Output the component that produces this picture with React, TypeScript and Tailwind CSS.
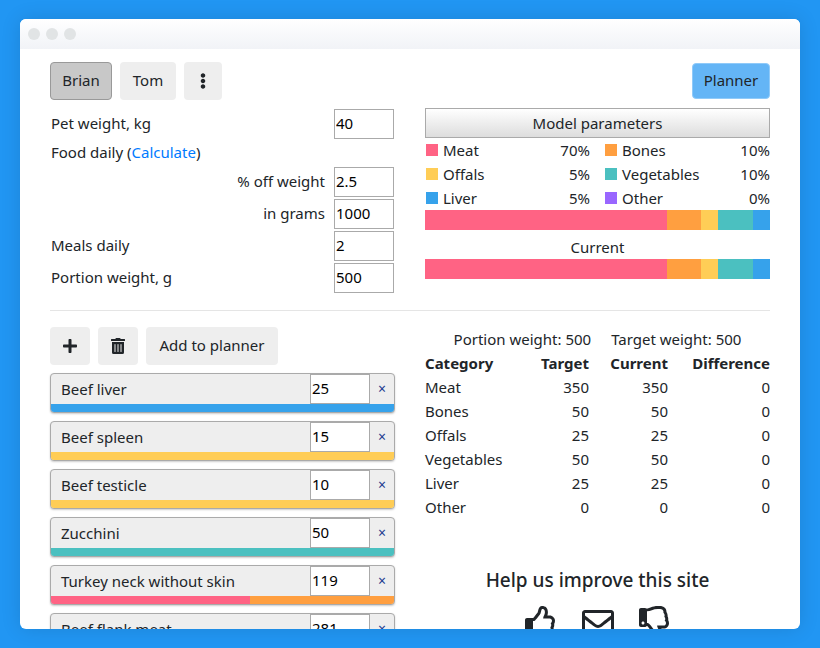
import React from 'react';
import { FaPlus, FaTrashAlt, FaEllipsisV, FaRegThumbsUp, FaRegThumbsDown, FaRegEnvelope } from 'react-icons/fa';

const legend: { name: string; pct: string; swatch: string }[] = [
  { name: 'Meat', pct: '70%', swatch: 'bg-[#ff6384]' },
  { name: 'Bones', pct: '10%', swatch: 'bg-[#ff9f40]' },
  { name: 'Offals', pct: '5%', swatch: 'bg-[#ffcd56]' },
  { name: 'Vegetables', pct: '10%', swatch: 'bg-[#4bc0c0]' },
  { name: 'Liver', pct: '5%', swatch: 'bg-[#36a2eb]' },
  { name: 'Other', pct: '0%', swatch: 'bg-[#9966ff]' },
];

const rows = [
  ['Meat', '350', '350', '0'],
  ['Bones', '50', '50', '0'],
  ['Offals', '25', '25', '0'],
  ['Vegetables', '50', '50', '0'],
  ['Liver', '25', '25', '0'],
  ['Other', '0', '0', '0'],
];

const foods: { name: string; qty: string; bars: { cls: string; w: string }[] }[] = [
  { name: 'Beef liver', qty: '25', bars: [{ cls: 'bg-[#36a2eb]', w: '100%' }] },
  { name: 'Beef spleen', qty: '15', bars: [{ cls: 'bg-[#ffcd56]', w: '100%' }] },
  { name: 'Beef testicle', qty: '10', bars: [{ cls: 'bg-[#ffcd56]', w: '100%' }] },
  { name: 'Zucchini', qty: '50', bars: [{ cls: 'bg-[#4bc0c0]', w: '100%' }] },
  { name: 'Turkey neck without skin', qty: '119', bars: [{ cls: 'bg-[#ff6384]', w: '58%' }, { cls: 'bg-[#ff9f40]', w: '42%' }] },
  { name: 'Beef flank meat', qty: '281', bars: [{ cls: 'bg-[#ff6384]', w: '100%' }] },
];

const NumInput = ({ value }: { value: string }) => (
  <input
    readOnly
    defaultValue={value}
    className="w-[60px] h-[30px] border border-[#aaaaaa] bg-white pl-[1px] pb-[2px] text-[15px] text-black outline-none"
  />
);

const Bar = () => (
  <div className="flex h-[20px] w-full">
    <div className="w-[70%] bg-[#ff6384]" />
    <div className="w-[10%] bg-[#ff9f40]" />
    <div className="w-[5%] bg-[#ffcd56]" />
    <div className="w-[10%] bg-[#4bc0c0]" />
    <div className="w-[5%] bg-[#36a2eb]" />
  </div>
);

const GrayButton = ({ children, className }: { children: React.ReactNode; className: string }) => (
  <button className={`h-[38px] rounded bg-[#eeeeee] flex items-center justify-center ${className}`}>{children}</button>
);

const Label = ({ children }: { children: React.ReactNode }) => <span className="pb-[2px]">{children}</span>;

export default function App() {
  return (
    <div className="h-[648px] w-[820px] overflow-hidden bg-[#2196f3] pt-[19px] px-[20px] text-[15px] leading-[24px] text-[#212529] font-['Noto_Sans','Liberation_Sans',sans-serif]">
      <div className="h-[610px] overflow-hidden rounded-md bg-white shadow-[0_0_20px_rgba(0,0,0,0.12)]">
        {/* Window bar */}
        <div className="flex h-[30px] items-center gap-[6px] bg-gradient-to-b from-white to-[#f1f3f7] pl-[8px]">
          <div className="h-[12px] w-[12px] rounded-full bg-[#e1e4e5]" />
          <div className="h-[12px] w-[12px] rounded-full bg-[#e1e4e5]" />
          <div className="h-[12px] w-[12px] rounded-full bg-[#e1e4e5]" />
        </div>

        <div className="px-[30px] pt-[13px]">
          {/* Pets */}
          <div className="flex items-center justify-between">
            <div className="flex gap-[8px]">
              <button className="h-[38px] w-[62px] rounded border border-[#999999] bg-[#c8c8c8] pb-[2px]">Brian</button>
              <GrayButton className="w-[56px] pb-[2px]">Tom</GrayButton>
              <GrayButton className="w-[38px]"><FaEllipsisV className="text-[16px]" /></GrayButton>
            </div>
            <button className="h-[36px] w-[78px] rounded border border-[#90caf9] bg-[#64b5f6] pb-[2px]">Planner</button>
          </div>

          <div className="mt-[8px] flex gap-[30px] border-b border-[#e5e5e5] pb-[17px]">
            {/* Pet form */}
            <div className="w-[345px] pt-[1px] pl-[1px] pr-[1px]">
              <div className="flex h-[30px] items-center justify-between"><Label>Pet weight, kg</Label><NumInput value="40" /></div>
              <div className="flex h-[28px] items-center">
                <Label>Food daily (<span className="text-[#007bff]">Calculate</span>)</Label>
              </div>
              <div className="flex flex-col gap-[2px]">
                <div className="flex h-[30px] items-center justify-end gap-[9px]"><Label>% off weight</Label><NumInput value="2.5" /></div>
                <div className="flex h-[30px] items-center justify-end gap-[9px]"><Label>in grams</Label><NumInput value="1000" /></div>
                <div className="flex h-[30px] items-center justify-between"><Label>Meals daily</Label><NumInput value="2" /></div>
                <div className="flex h-[30px] items-center justify-between"><Label>Portion weight, g</Label><NumInput value="500" /></div>
              </div>
            </div>

            {/* Model parameters */}
            <div className="w-[345px]">
              <button className="h-[30px] w-full border border-[#aaaaaa] bg-gradient-to-b from-white to-[#dddddd]">Model parameters</button>
              <div className="grid grid-cols-2 gap-x-[15px]">
                {legend.map((l, i) => (
                  <div key={l.name} className={`flex h-[24px] items-center ${i % 2 === 0 ? 'pl-[1px]' : ''}`}>
                    <div className={`mr-[5px] h-[12px] w-[12px] ${l.swatch}`} />
                    <span>{l.name}</span>
                    <span className="ml-auto">{l.pct}</span>
                  </div>
                ))}
              </div>
              <Bar />
              <div className="mt-[5px] h-[24px] text-center">Current</div>
              <Bar />
            </div>
          </div>

          <div className="mt-[16px] flex gap-[30px]">
            {/* Foods */}
            <div className="w-[345px]">
              <div className="flex gap-[8px]">
                <GrayButton className="w-[40px]"><FaPlus className="text-[16px]" /></GrayButton>
                <GrayButton className="w-[40px]"><FaTrashAlt className="text-[16px]" /></GrayButton>
                <GrayButton className="w-[132px] pb-[2px]">Add to planner</GrayButton>
              </div>
              <div className="mt-[8px] flex flex-col gap-[8px]">
                {foods.map((f) => (
                  <div key={f.name} className="h-[40px] overflow-hidden rounded border border-[#aaaaaa] bg-[#eeeeee] shadow-[0_1px_2px_rgba(0,0,0,0.2)]">
                    <div className="flex h-[30px] items-center">
                      <span className="flex-1 pl-[10px]">{f.name}</span>
                      <input readOnly defaultValue={f.qty} className="h-[30px] w-[60px] border border-[#aaaaaa] bg-white pl-[1px] pb-[2px] text-black outline-none" />
                      <span className="w-[24px] text-center text-[14px] text-[#1a3a8e]">×</span>
                    </div>
                    <div className="flex h-[8px]">
                      {f.bars.map((b) => (
                        <div key={b.cls} className={b.cls} style={{ width: b.w }} />
                      ))}
                    </div>
                  </div>
                ))}
              </div>
            </div>

            {/* Portion table */}
            <div className="w-[345px]">
              <div className="flex h-[24px] justify-center gap-[20px]">
                <span>Portion weight: 500</span>
                <span>Target weight: 500</span>
              </div>
              <table className="w-full">
                <thead>
                  <tr className="h-[24px] font-bold">
                    <th className="w-[100px] text-left">Category</th>
                    <th className="w-[64px] text-right">Target</th>
                    <th className="w-[79px] text-right">Current</th>
                    <th className="text-right">Difference</th>
                  </tr>
                </thead>
                <tbody>
                  {rows.map((r) => (
                    <tr key={r[0]} className="h-[24px]">
                      <td>{r[0]}</td>
                      <td className="text-right">{r[1]}</td>
                      <td className="text-right">{r[2]}</td>
                      <td className="text-right">{r[3]}</td>
                    </tr>
                  ))}
                </tbody>
              </table>
              <div className="mt-[46px] text-center text-[19px] font-medium leading-[30px]">Help us improve this site</div>
              <div className="mt-[11px] flex justify-center gap-[25px] text-[32px]">
                <FaRegThumbsUp />
                <FaRegEnvelope />
                <FaRegThumbsDown />
              </div>
            </div>
          </div>
        </div>
      </div>
    </div>
  );
}
